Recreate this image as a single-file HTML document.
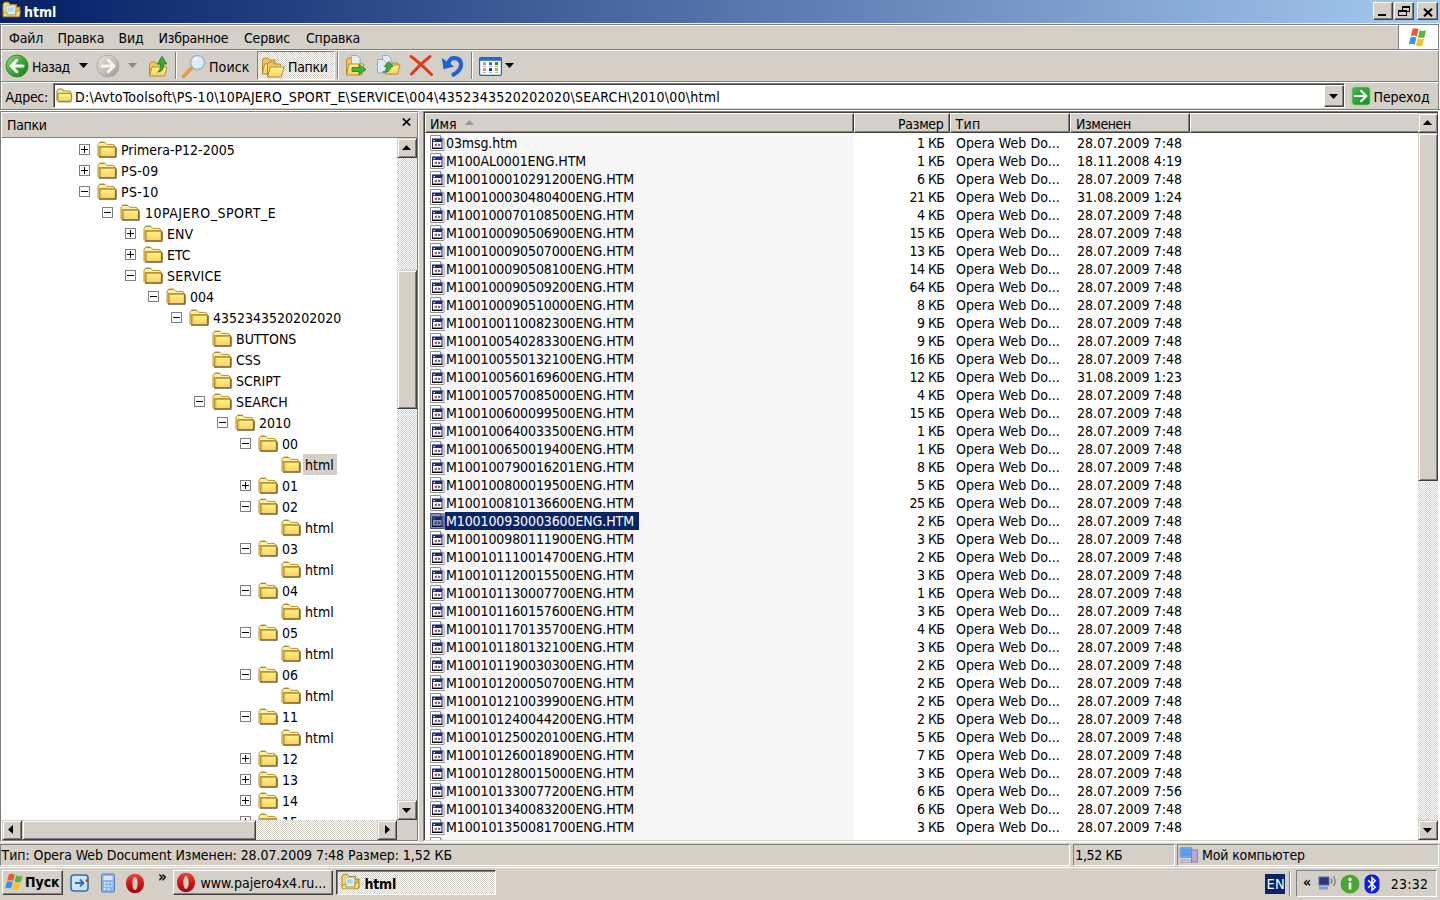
<!DOCTYPE html>
<html lang="ru"><head><meta charset="utf-8"><title>html</title>
<style>
*{box-sizing:border-box;margin:0;padding:0}
html,body{width:1440px;height:900px;overflow:hidden}
body{position:relative;background:#d4d0c8;font-family:"DejaVu Sans Condensed","DejaVu Sans","Liberation Sans",sans-serif;font-size:14px;font-stretch:condensed;color:#000;line-height:18px;white-space:nowrap}
div,span,i,b,svg{position:absolute;display:block}
i,b{font-style:normal;font-weight:normal}
.hl{background:#fff}.sh{background:#808080}.dk{background:#404040}
.raised{background:#d4d0c8;border:1px solid;border-color:#fff #404040 #404040 #fff;box-shadow:inset -1px -1px #808080}
.sbtn{background:#d4d0c8;border:1px solid;border-color:#d4d0c8 #404040 #404040 #d4d0c8;box-shadow:inset 1px 1px #fff,inset -1px -1px #808080}
.sunk{border:1px solid;border-color:#808080 #fff #fff #808080;box-shadow:inset 1px 1px #404040}
.dith{background:repeating-conic-gradient(#fff 0% 25%,#d4d0c8 0% 50%) 0 0/2px 2px}
#title{left:0;top:0;width:1440px;height:23px;background:linear-gradient(90deg,#0a246a 0%,#0a246a 4%,#a6caf0 100%)}
#title .cap{left:24px;top:3px;color:#fff;font-weight:bold;font-size:14px;letter-spacing:0}
.cb{top:2px;width:20px;height:18px}
.mi{top:29px;line-height:18px;letter-spacing:-.2px}
.tb{top:58px;line-height:18px}
.arr{width:0;height:0;border-left:4.5px solid transparent;border-right:4.5px solid transparent;border-top:5px solid #000}
.vsep{width:2px;top:52px;height:27px;border-left:1px solid #808080;border-right:1px solid #fff}
#treepane{left:0;top:111px;width:419px;height:731px;border:1px solid;border-color:#808080 #fff #fff #808080;box-shadow:inset 1px 1px #fff,inset -1px -1px #808080}
#treehdr{left:1px;top:1px;width:415px;height:24px}
#treehdr .t{left:5px;top:3px;letter-spacing:-.33px}
#tree{left:1px;top:26px;width:395px;height:682px;background:#fff;overflow:hidden}
.tr{left:0;width:396px;height:21px}
.bx{top:4px;width:11px;height:11px;border:1px solid #808080;background:#fff}
.bx:before{content:"";position:absolute;left:1px;top:4px;width:7px;height:1px;background:#000}
.bx .v{left:4px;top:1px;width:1px;height:7px;background:#000}
.fo{top:1px}
.tl{top:0;height:20px;line-height:20px;padding:0 2px;letter-spacing:0}
.tl.sel{background:#d4d0c8;top:-1px;height:21px;line-height:22px;padding-right:3px}
#listpane{left:423px;top:111px;width:1017px;height:731px}
#list{left:2px;top:22px;width:993px;height:707px;background:#fff;overflow:hidden}
#sortcol{left:5px;top:0;width:424px;height:707px;background:#f7f7f7}
.r{left:0;width:993px;height:18px;top:0}
.r span{top:0;line-height:18px}
.fi{left:5px;top:1px}
.n{left:20px;padding:0 5px 0 1px;letter-spacing:-.1px}
.z{right:473.5px;text-align:right;letter-spacing:-.5px}
.y{left:531px;letter-spacing:.05px}
.d{left:652px;letter-spacing:.05px}
.r.s .n{background:#0a246a;color:#fff}
.tint{left:5px;top:1px;width:15px;height:16px;background:rgba(10,36,106,.5)}
.hc{top:0;height:20px;background:#d4d0c8;border:1px solid;border-color:#fff #404040 #404040 #fff;box-shadow:inset -1px -1px #808080;line-height:17px}
</style></head><body>
<svg width="0" height="0" style="left:-10px;top:-10px"><defs>
<linearGradient id="gf" x1="0" y1="0" x2="0" y2="1"><stop offset="0" stop-color="#fff68e"/><stop offset="1" stop-color="#fbd062"/></linearGradient>
<linearGradient id="gg" x1="0" y1="0" x2="1" y2="1"><stop offset="0" stop-color="#9be07a"/><stop offset=".5" stop-color="#3aa935"/><stop offset="1" stop-color="#1b7a1c"/></linearGradient>
<linearGradient id="ggr" x1="0" y1="0" x2="1" y2="1"><stop offset="0" stop-color="#e9e9e6"/><stop offset=".6" stop-color="#b9b8b2"/><stop offset="1" stop-color="#9a9994"/></linearGradient>
<linearGradient id="gop" x1="0" y1="0" x2="0" y2="1"><stop offset="0" stop-color="#f0483a"/><stop offset=".5" stop-color="#d41418"/><stop offset="1" stop-color="#9c0c10"/></linearGradient>
<linearGradient id="ggo" x1="0" y1="0" x2="1" y2="1"><stop offset="0" stop-color="#48b848"/><stop offset="1" stop-color="#1c8a24"/></linearGradient>
<g id="folder"><path d="M1 15.500V3.200L2.800 1.200H7.600L9.800 3.400H16Q17.600 3.600 17.800 5.500V7" fill="#fbf0a8" stroke="#b8922e"/><path d="M2.600 .8H7.600V2H2.600Z" fill="#a89030"/><rect x="2.300" y="5.800" width="16" height="9.700" fill="url(#gf)" stroke="#b4872a"/><path d="M2.300 5.900H18.300" stroke="#c09428" stroke-width="1.600"/><path d="M3.500 7V15" stroke="#d4a838" stroke-width="1.500" stroke-opacity=".8"/><path d="M19 6.500V15.800" stroke="#7a621c" stroke-width="1.500"/><path d="M2 16.300H19.500" stroke="#5f5f48" stroke-width="1.300" stroke-opacity=".8"/></g>
<g id="sfolder"><path d="M1 12.500V3.200L2.500 1.200H6L7.600 3H13Q14.600 3.200 14.700 5V6" fill="#fbf0a8" stroke="#a8942c" stroke-width="1.200"/><rect x="1.700" y="5.300" width="13.800" height="8" rx="1.200" fill="url(#gf)" stroke="#a8942c" stroke-width="1.300"/><path d="M2.500 14.100H15" stroke="#6b5b2b" stroke-opacity=".45"/></g>
<g id="hfile"><path d="M.5 .5H10.500L14 4V15.500H.5Z" fill="#fff" stroke="#8e8e8e"/><path d="M10.500 .5V4H14" fill="#ecece8" stroke="#8e8e8e"/><rect x="2.500" y="4" width="9.500" height="9" fill="#fff" stroke="#23235e"/><rect x="2.500" y="4" width="9.500" height="3" fill="#1a2a8c"/><path d="M2 13.500H12.500" stroke="#000"/><path d="M6.800 8.200V11.600L4.100 9.900Z" fill="#c8281e"/><path d="M8.200 8.200V11.600L10.900 9.900Z" fill="#1e50c8"/><rect x="3.500" y="5" width="1.400" height="1.200" fill="#fff"/></g>
</defs></svg>

<div id="title"><svg style="left:2px;top:1px" width="20" height="18" viewBox="0 0 20 18"><path d="M1 15V3.500L2.500 1.200H6.500L8 3.500H14.500V7" fill="#f3d77a" stroke="#b08a2c"/><rect x="13.500" y="6" width="4.500" height="9" fill="#f0b43c" stroke="#9a7420" stroke-width=".8"/><rect x="4.500" y="4.500" width="9" height="9.500" fill="#d8eef0" stroke="#a8c4cc" stroke-width=".8"/><rect x="6" y="6.500" width="5.500" height="4" fill="#a8d4f0"/><path d="M1 15.800L1.800 11.500H5V14H14V10H18.400L17.200 15.800Z" fill="#f7dc80" stroke="#b08a2c" stroke-width=".8"/></svg><span class="cap">html</span>
<div class="cb raised" style="left:1373px"><i style="left:4px;top:11px;width:8px;height:2px;background:#000"></i></div>
<div class="cb raised" style="left:1394px"><i style="left:7px;top:3px;width:8px;height:6px;border:1px solid #000;border-top-width:2px"></i><i style="left:3px;top:7px;width:9px;height:6px;border:1px solid #000;border-top-width:2px;background:#d4d0c8"></i></div>
<div class="cb raised" style="left:1417px;width:21px"><svg style="left:5px;top:4.5px" width="10" height="9" viewBox="0 0 10 9"><path d="M1 .7L9 8.300M9 .7L1 8.300" stroke="#000" stroke-width="2"/></svg></div>
</div>
<i class="hl" style="left:0;top:23px;width:1440px;height:1px;background:#eeece8"></i>
<i class="sh" style="left:0;top:24px;width:1440px;height:1px"></i>
<i class="hl" style="left:1px;top:25px;width:1438px;height:1px"></i>
<i class="sh" style="left:0;top:24px;width:1px;height:87px"></i>
<i class="hl" style="left:1px;top:25px;width:1px;height:85px"></i>
<i class="sh" style="left:1438px;top:24px;width:1px;height:87px"></i>
<i class="hl" style="left:1439px;top:24px;width:1px;height:87px"></i>
<span class="mi" style="left:9px">Файл</span><span class="mi" style="left:57.5px">Правка</span><span class="mi" style="left:118.5px">Вид</span><span class="mi" style="left:158.5px">Избранное</span><span class="mi" style="left:244px">Сервис</span><span class="mi" style="left:306px">Справка</span>
<div style="left:1398px;top:25px;width:40px;height:24px;background:#fff;border-left:1px solid #808080"><svg style="left:9px;top:2px" width="23" height="21" viewBox="0 0 21 20" preserveAspectRatio="none"><path d="M4.2 1.8Q7 .2 9.6 2.2L8 9Q5.4 7.2 2.6 8.8Z" fill="#f2572c"/><path d="M10.8 2.8Q13.6 4.6 16.6 3L15 9.8Q12 11.4 9.2 9.6Z" fill="#5fb535"/><path d="M2.3 10Q5 8.4 7.7 10.2L6.1 17Q3.4 15.2 .7 16.8Z" fill="#3f8fe0"/><path d="M8.9 10.8Q11.7 12.6 14.7 11L13.1 17.8Q10.2 19.4 7.3 17.6Z" fill="#f8c41c"/></svg></div>
<i class="sh" style="left:1px;top:49px;width:1438px;height:1px"></i><i class="hl" style="left:1px;top:50px;width:1438px;height:1px"></i>
<i class="sh" style="left:1px;top:81px;width:1438px;height:1px"></i><i class="hl" style="left:1px;top:82px;width:1438px;height:1px"></i>
<i class="sh" style="left:0;top:109px;width:1440px;height:1px"></i><i class="hl" style="left:0;top:110px;width:1440px;height:1px"></i>

<svg style="left:5px;top:54px" width="24" height="24" viewBox="0 0 24 24"><circle cx="12" cy="12" r="11" fill="url(#gg)" stroke="#2c7a2a" stroke-width=".8"/><path d="M18 12H7M11.800 6.300L6 12L11.800 17.700" stroke="#fff" stroke-width="3" fill="none" stroke-linecap="round" stroke-linejoin="round"/></svg>
<span class="tb" style="left:32px;letter-spacing:-.5px">Назад</span>
<svg style="left:79px;top:63px" width="9" height="5"><polygon points="0,0 9,0 4.5,5" fill="#000"/></svg>
<svg style="left:96px;top:54px" width="24" height="24" viewBox="0 0 24 24"><circle cx="12" cy="12" r="11" fill="url(#ggr)" stroke="#a3a29c" stroke-width=".8"/><path d="M6 12H17M12.200 6.300L18 12L12.200 17.700" stroke="#f4f4f1" stroke-width="3" fill="none" stroke-linecap="round" stroke-linejoin="round"/></svg>
<svg style="left:128px;top:63px" width="9" height="5"><polygon points="0,0 9,0 4.5,5" fill="#8a8a86"/></svg>
<svg style="left:148px;top:54px" width="21" height="24" viewBox="0 0 21 24"><path d="M1.5 21V10L3 8H7L8.5 10H15V12" fill="#ecc860" stroke="#b48d2d"/><path d="M1.5 22L4 13H19L16.5 22Z" fill="url(#gf)" stroke="#b48d2d"/><path d="M9.5 18Q12.5 17 12.5 10H9.5L14 2.2L18.8 10H15.8Q15.8 18 9.5 18Z" fill="#3aa935" stroke="#1f7a22" stroke-width=".8"/></svg>
<i class="vsep" style="left:175px"></i>
<svg style="left:181px;top:54px" width="25" height="25" viewBox="0 0 25 25"><path d="M2.5 22.5L11 13.5" stroke="#e59a3c" stroke-width="3.6" stroke-linecap="round"/><circle cx="16.5" cy="8.5" r="7" fill="#d9eefb" stroke="#9fb7c8" stroke-width="1.6"/><path d="M12.5 7Q13.5 4 17 3.6" stroke="#fff" stroke-width="1.6" fill="none"/></svg>
<span class="tb" style="left:209px;letter-spacing:.1px">Поиск</span>
<div class="dith sunk" style="left:257px;top:51px;width:78px;height:29px;box-shadow:none"></div>
<svg style="left:261px;top:56px" width="24" height="22" viewBox="0 0 24 22"><path d="M1.5 17V4L3 2H7L8.5 4H14V7" fill="#ecc860" stroke="#b48d2d"/><path d="M1.5 18L3.5 8H16L14 18Z" fill="url(#gf)" stroke="#b48d2d"/><path d="M6.5 20V8L8 6H12L13.5 8H19.5V10" fill="#ecc860" stroke="#b48d2d"/><path d="M6.5 21L9.5 11H23L20 21Z" fill="url(#gf)" stroke="#b48d2d"/></svg>
<span class="tb" style="left:288px;letter-spacing:-.3px">Папки</span>
<i class="vsep" style="left:337px"></i>
<svg style="left:345px;top:54px" width="23" height="23" viewBox="0 0 23 23"><path d="M1.5 21V6L3 4H7L8.5 6H15V9" fill="#ecc860" stroke="#b48d2d"/><path d="M6.5 1.5H12L15 4.5V12H6.5Z" fill="#e4ecf8" stroke="#9aa8c8"/><path d="M1.5 21L4 10H19L16.5 21Z" fill="url(#gf)" stroke="#b48d2d"/><path d="M7 13.5H14V10.5L21 15.5L14 20.5V17.5H7Z" fill="#3fb43a" stroke="#1f7a22" stroke-width=".8"/></svg>
<svg style="left:376px;top:54px" width="25" height="23" viewBox="0 0 25 23"><path d="M9 20V9L10.5 7H14L15.5 9H22V12" fill="#ecc860" stroke="#b48d2d"/><path d="M9 20L11.5 11H24L21.5 20Z" fill="url(#gf)" stroke="#b48d2d"/><path d="M6.5 1.5H12L15 4.5V14H6.5Z" fill="#e4ecf8" stroke="#9aa8c8"/><path d="M1.5 5.500H7L10 8.500V19H1.500Z" fill="#dfe8f6" stroke="#9aa8c8"/><path d="M6.500 18Q10.500 18 11 12.500H8.500L12.700 7.500L17 12.500H14.500Q14 19.500 6.500 18Z" fill="#3fb43a" stroke="#1f7a22" stroke-width=".8"/></svg>
<svg style="left:409px;top:54px" width="25" height="23" viewBox="0 0 25 23"><path d="M2 2.500Q10 8 22.500 20.500M21 2.500Q11 10 2.500 20" stroke="#e23a1c" stroke-width="3" stroke-linecap="round" fill="none"/></svg>
<svg style="left:441px;top:55px" width="24" height="22" viewBox="0 0 24 22"><path d="M12.500 19.500Q20.500 15.500 20 8.500Q19 2.800 12.500 3.200Q8.500 3.500 7.500 8.500" stroke="#1f62d0" stroke-width="4.200" fill="none" stroke-linecap="round"/><path d="M.8 3L2.600 14.300L13.200 11.500Z" fill="#1f62d0"/></svg>
<i class="vsep" style="left:471px"></i>
<svg style="left:479px;top:57px" width="23" height="19" viewBox="0 0 23 19"><rect x=".6" y=".6" width="21.800" height="17.800" rx="1.300" fill="#fff" stroke="#2060c0" stroke-width="1.200"/><rect x=".6" y=".6" width="21.800" height="3.200" fill="#2a6ad0"/><rect x="4" y="5.200" width="3" height="2.800" fill="#9aa4ac"/><rect x="10" y="5.200" width="3" height="2.800" fill="#3a6ab0"/><rect x="16" y="5.200" width="3" height="2.800" fill="#1e8a1e"/><rect x="4" y="11.200" width="3" height="2.800" fill="#e0904a"/><rect x="10" y="11.200" width="3" height="2.800" fill="#12307a"/><rect x="16" y="11.200" width="3" height="2.800" fill="#c8a040"/><path d="M4 9.400H7M10 9.400H13M16 9.400H19M4 15.500H7M10 15.500H13M16 15.500H19" stroke="#a0a0b4" stroke-width=".8"/></svg>
<svg style="left:505px;top:63px" width="9" height="5"><polygon points="0,0 9,0 4.5,5" fill="#000"/></svg>
<span style="left:5.5px;top:88px;line-height:18px;letter-spacing:-.3px">Адрес:</span>
<div class="sunk" style="left:53px;top:83px;width:1292px;height:25px;background:#fff"></div>
<svg style="left:55.5px;top:88px" width="17" height="15" viewBox="0 0 17 15"><use href="#sfolder"/></svg>
<span style="left:75px;top:88px;line-height:18px;letter-spacing:.24px" class="addr">D:\AvtoToolsoft\PS-10\10PAJERO_SPORT_E\SERVICE\004\4352343520202020\SEARCH\2010\00\html</span>
<div class="raised" style="left:1324px;top:85px;width:20px;height:22px"></div>
<svg style="left:1329px;top:94px" width="9" height="5"><polygon points="0,0 9,0 4.5,5" fill="#000"/></svg>
<svg style="left:1351px;top:86px" width="20" height="20" viewBox="0 0 20 20"><rect x=".7" y=".7" width="18.600" height="18.600" rx="3" fill="url(#ggo)" stroke="#a8dca0" stroke-width="1.200"/><path d="M4 10H15M10 4.800L15.400 10L10 15.200" stroke="#fff" stroke-width="2.200" fill="none" stroke-linecap="round" stroke-linejoin="round"/></svg>
<span style="left:1373.6px;top:88px;line-height:18px;letter-spacing:-.13px">Переход</span>
<div id="treepane">
<div id="treehdr"><span class="t">Папки</span><svg style="left:400px;top:5px" width="9" height="8" viewBox="0 0 9 8"><path d="M.8 .5L8.2 7.5M8.2 .5L.8 7.5" stroke="#000" stroke-width="1.7"/></svg></div>
<div id="tree">
<div class="tr" style="top:2px"><i class="bx" style="left:77px"><b class="v"></b></i><svg class="fo" style="left:94.5px" width="20" height="17" viewBox="0 0 20 17"><use href="#folder"/></svg><span class="tl" style="left:117px">Primera-P12-2005</span></div>
<div class="tr" style="top:23px"><i class="bx" style="left:77px"><b class="v"></b></i><svg class="fo" style="left:94.5px" width="20" height="17" viewBox="0 0 20 17"><use href="#folder"/></svg><span class="tl" style="left:117px;letter-spacing:0.3px">PS-09</span></div>
<div class="tr" style="top:44px"><i class="bx" style="left:77px"></i><svg class="fo" style="left:94.5px" width="20" height="17" viewBox="0 0 20 17"><use href="#folder"/></svg><span class="tl" style="left:117px;letter-spacing:0.3px">PS-10</span></div>
<div class="tr" style="top:65px"><i class="bx" style="left:100px"></i><svg class="fo" style="left:117.5px" width="20" height="17" viewBox="0 0 20 17"><use href="#folder"/></svg><span class="tl" style="left:141px;letter-spacing:0.5px">10PAJERO_SPORT_E</span></div>
<div class="tr" style="top:86px"><i class="bx" style="left:123px"><b class="v"></b></i><svg class="fo" style="left:140.5px" width="20" height="17" viewBox="0 0 20 17"><use href="#folder"/></svg><span class="tl" style="left:163px">ENV</span></div>
<div class="tr" style="top:107px"><i class="bx" style="left:123px"><b class="v"></b></i><svg class="fo" style="left:140.5px" width="20" height="17" viewBox="0 0 20 17"><use href="#folder"/></svg><span class="tl" style="left:163px">ETC</span></div>
<div class="tr" style="top:128px"><i class="bx" style="left:123px"></i><svg class="fo" style="left:140.5px" width="20" height="17" viewBox="0 0 20 17"><use href="#folder"/></svg><span class="tl" style="left:163px;letter-spacing:0.25px">SERVICE</span></div>
<div class="tr" style="top:149px"><i class="bx" style="left:146px"></i><svg class="fo" style="left:163.5px" width="20" height="17" viewBox="0 0 20 17"><use href="#folder"/></svg><span class="tl" style="left:186px">004</span></div>
<div class="tr" style="top:170px"><i class="bx" style="left:169px"></i><svg class="fo" style="left:186.5px" width="20" height="17" viewBox="0 0 20 17"><use href="#folder"/></svg><span class="tl" style="left:209px">4352343520202020</span></div>
<div class="tr" style="top:191px"><svg class="fo" style="left:209.5px" width="20" height="17" viewBox="0 0 20 17"><use href="#folder"/></svg><span class="tl" style="left:232px">BUTTONS</span></div>
<div class="tr" style="top:212px"><svg class="fo" style="left:209.5px" width="20" height="17" viewBox="0 0 20 17"><use href="#folder"/></svg><span class="tl" style="left:232px">CSS</span></div>
<div class="tr" style="top:233px"><svg class="fo" style="left:209.5px" width="20" height="17" viewBox="0 0 20 17"><use href="#folder"/></svg><span class="tl" style="left:232px">SCRIPT</span></div>
<div class="tr" style="top:254px"><i class="bx" style="left:192px"></i><svg class="fo" style="left:209.5px" width="20" height="17" viewBox="0 0 20 17"><use href="#folder"/></svg><span class="tl" style="left:232px;letter-spacing:0.15px">SEARCH</span></div>
<div class="tr" style="top:275px"><i class="bx" style="left:215px"></i><svg class="fo" style="left:232.5px" width="20" height="17" viewBox="0 0 20 17"><use href="#folder"/></svg><span class="tl" style="left:255px">2010</span></div>
<div class="tr" style="top:296px"><i class="bx" style="left:238px"></i><svg class="fo" style="left:255.5px" width="20" height="17" viewBox="0 0 20 17"><use href="#folder"/></svg><span class="tl" style="left:278px">00</span></div>
<div class="tr" style="top:317px"><svg class="fo" style="left:278.5px" width="20" height="17" viewBox="0 0 20 17"><use href="#folder"/></svg><span class="tl sel" style="left:301px">html</span></div>
<div class="tr" style="top:338px"><i class="bx" style="left:238px"><b class="v"></b></i><svg class="fo" style="left:255.5px" width="20" height="17" viewBox="0 0 20 17"><use href="#folder"/></svg><span class="tl" style="left:278px">01</span></div>
<div class="tr" style="top:359px"><i class="bx" style="left:238px"></i><svg class="fo" style="left:255.5px" width="20" height="17" viewBox="0 0 20 17"><use href="#folder"/></svg><span class="tl" style="left:278px">02</span></div>
<div class="tr" style="top:380px"><svg class="fo" style="left:278.5px" width="20" height="17" viewBox="0 0 20 17"><use href="#folder"/></svg><span class="tl" style="left:301px">html</span></div>
<div class="tr" style="top:401px"><i class="bx" style="left:238px"></i><svg class="fo" style="left:255.5px" width="20" height="17" viewBox="0 0 20 17"><use href="#folder"/></svg><span class="tl" style="left:278px">03</span></div>
<div class="tr" style="top:422px"><svg class="fo" style="left:278.5px" width="20" height="17" viewBox="0 0 20 17"><use href="#folder"/></svg><span class="tl" style="left:301px">html</span></div>
<div class="tr" style="top:443px"><i class="bx" style="left:238px"></i><svg class="fo" style="left:255.5px" width="20" height="17" viewBox="0 0 20 17"><use href="#folder"/></svg><span class="tl" style="left:278px">04</span></div>
<div class="tr" style="top:464px"><svg class="fo" style="left:278.5px" width="20" height="17" viewBox="0 0 20 17"><use href="#folder"/></svg><span class="tl" style="left:301px">html</span></div>
<div class="tr" style="top:485px"><i class="bx" style="left:238px"></i><svg class="fo" style="left:255.5px" width="20" height="17" viewBox="0 0 20 17"><use href="#folder"/></svg><span class="tl" style="left:278px">05</span></div>
<div class="tr" style="top:506px"><svg class="fo" style="left:278.5px" width="20" height="17" viewBox="0 0 20 17"><use href="#folder"/></svg><span class="tl" style="left:301px">html</span></div>
<div class="tr" style="top:527px"><i class="bx" style="left:238px"></i><svg class="fo" style="left:255.5px" width="20" height="17" viewBox="0 0 20 17"><use href="#folder"/></svg><span class="tl" style="left:278px">06</span></div>
<div class="tr" style="top:548px"><svg class="fo" style="left:278.5px" width="20" height="17" viewBox="0 0 20 17"><use href="#folder"/></svg><span class="tl" style="left:301px">html</span></div>
<div class="tr" style="top:569px"><i class="bx" style="left:238px"></i><svg class="fo" style="left:255.5px" width="20" height="17" viewBox="0 0 20 17"><use href="#folder"/></svg><span class="tl" style="left:278px">11</span></div>
<div class="tr" style="top:590px"><svg class="fo" style="left:278.5px" width="20" height="17" viewBox="0 0 20 17"><use href="#folder"/></svg><span class="tl" style="left:301px">html</span></div>
<div class="tr" style="top:611px"><i class="bx" style="left:238px"><b class="v"></b></i><svg class="fo" style="left:255.5px" width="20" height="17" viewBox="0 0 20 17"><use href="#folder"/></svg><span class="tl" style="left:278px">12</span></div>
<div class="tr" style="top:632px"><i class="bx" style="left:238px"><b class="v"></b></i><svg class="fo" style="left:255.5px" width="20" height="17" viewBox="0 0 20 17"><use href="#folder"/></svg><span class="tl" style="left:278px">13</span></div>
<div class="tr" style="top:653px"><i class="bx" style="left:238px"><b class="v"></b></i><svg class="fo" style="left:255.5px" width="20" height="17" viewBox="0 0 20 17"><use href="#folder"/></svg><span class="tl" style="left:278px">14</span></div>
<div class="tr" style="top:674px"><i class="bx" style="left:238px"><b class="v"></b></i><svg class="fo" style="left:255.5px" width="20" height="17" viewBox="0 0 20 17"><use href="#folder"/></svg><span class="tl" style="left:278px">15</span></div>
</div>
<i class="sh" style="left:1px;top:25px;width:415px;height:1px"></i>
<div class="dith" style="left:396px;top:26px;width:20px;height:682px"></div>
<div class="sbtn" style="left:396px;top:26px;width:20px;height:20px"></div><svg style="left:400.5px;top:33px" width="9" height="5"><polygon points="0,5 9,5 4.5,0" fill="#000"/></svg>
<div class="sbtn" style="left:396px;top:158px;width:20px;height:139px"></div>
<div class="sbtn" style="left:396px;top:688px;width:20px;height:20px"></div><svg style="left:400.5px;top:695.5px" width="9" height="5"><polygon points="0,0 9,0 4.5,5" fill="#000"/></svg>
<div class="dith" style="left:1px;top:708px;width:395px;height:20px"></div>
<div class="sbtn" style="left:1px;top:708px;width:20px;height:20px"></div><svg style="left:7px;top:713px" width="5" height="9"><polygon points="5,0 5,9 0,4.5" fill="#000"/></svg>
<div class="sbtn" style="left:21px;top:708px;width:234px;height:20px"></div>
<div class="sbtn" style="left:376px;top:708px;width:20px;height:20px"></div><svg style="left:383.5px;top:713px" width="5" height="9"><polygon points="0,0 0,9 5,4.5" fill="#000"/></svg>
<i style="left:396px;top:708px;width:20px;height:20px;background:#d4d0c8"></i>
</div>
<div id="listpane">
<i class="sh" style="left:0;top:0;width:1016px;height:1px"></i><i class="dk" style="left:1px;top:1px;width:1014px;height:1px"></i>
<i class="sh" style="left:0;top:0;width:1px;height:730px"></i><i class="dk" style="left:1px;top:1px;width:1px;height:728px"></i>
<i class="hl" style="left:1015px;top:0;width:2px;height:731px"></i><i class="hl" style="left:0;top:730px;width:1017px;height:1px"></i>
<div class="hc" style="left:2px;top:2px;width:429px"><span style="left:4px;top:2px">Имя</span><svg style="left:39px;top:6px" width="9" height="5"><polygon points="0,5 9,5 4.5,0" fill="#9a9890"/></svg></div>
<div class="hc" style="left:431px;top:2px;width:96px"><span style="right:5.5px;top:2px;letter-spacing:-.3px">Размер</span></div>
<div class="hc" style="left:527px;top:2px;width:120px"><span style="left:4.5px;top:2px;letter-spacing:.3px">Тип</span></div>
<div class="hc" style="left:647px;top:2px;width:120px"><span style="left:5px;top:2px;letter-spacing:-.4px">Изменен</span></div>
<div class="hc" style="left:767px;top:2px;width:240px"></div>
<div id="list">
<div id="sortcol"></div>
<div class="r" style="top:1px"><svg class="fi" width="16" height="16" viewBox="0 0 16 16"><use href="#hfile"/></svg><span class="n">03msg.htm</span><span class="z">1 КБ</span><span class="y">Opera Web Do...</span><span class="d">28.07.2009 7:48</span></div>
<div class="r" style="top:19px"><svg class="fi" width="16" height="16" viewBox="0 0 16 16"><use href="#hfile"/></svg><span class="n">M100AL0001ENG.HTM</span><span class="z">1 КБ</span><span class="y">Opera Web Do...</span><span class="d">18.11.2008 4:19</span></div>
<div class="r" style="top:37px"><svg class="fi" width="16" height="16" viewBox="0 0 16 16"><use href="#hfile"/></svg><span class="n">M100100010291200ENG.HTM</span><span class="z">6 КБ</span><span class="y">Opera Web Do...</span><span class="d">28.07.2009 7:48</span></div>
<div class="r" style="top:55px"><svg class="fi" width="16" height="16" viewBox="0 0 16 16"><use href="#hfile"/></svg><span class="n">M100100030480400ENG.HTM</span><span class="z">21 КБ</span><span class="y">Opera Web Do...</span><span class="d">31.08.2009 1:24</span></div>
<div class="r" style="top:73px"><svg class="fi" width="16" height="16" viewBox="0 0 16 16"><use href="#hfile"/></svg><span class="n">M100100070108500ENG.HTM</span><span class="z">4 КБ</span><span class="y">Opera Web Do...</span><span class="d">28.07.2009 7:48</span></div>
<div class="r" style="top:91px"><svg class="fi" width="16" height="16" viewBox="0 0 16 16"><use href="#hfile"/></svg><span class="n">M100100090506900ENG.HTM</span><span class="z">15 КБ</span><span class="y">Opera Web Do...</span><span class="d">28.07.2009 7:48</span></div>
<div class="r" style="top:109px"><svg class="fi" width="16" height="16" viewBox="0 0 16 16"><use href="#hfile"/></svg><span class="n">M100100090507000ENG.HTM</span><span class="z">13 КБ</span><span class="y">Opera Web Do...</span><span class="d">28.07.2009 7:48</span></div>
<div class="r" style="top:127px"><svg class="fi" width="16" height="16" viewBox="0 0 16 16"><use href="#hfile"/></svg><span class="n">M100100090508100ENG.HTM</span><span class="z">14 КБ</span><span class="y">Opera Web Do...</span><span class="d">28.07.2009 7:48</span></div>
<div class="r" style="top:145px"><svg class="fi" width="16" height="16" viewBox="0 0 16 16"><use href="#hfile"/></svg><span class="n">M100100090509200ENG.HTM</span><span class="z">64 КБ</span><span class="y">Opera Web Do...</span><span class="d">28.07.2009 7:48</span></div>
<div class="r" style="top:163px"><svg class="fi" width="16" height="16" viewBox="0 0 16 16"><use href="#hfile"/></svg><span class="n">M100100090510000ENG.HTM</span><span class="z">8 КБ</span><span class="y">Opera Web Do...</span><span class="d">28.07.2009 7:48</span></div>
<div class="r" style="top:181px"><svg class="fi" width="16" height="16" viewBox="0 0 16 16"><use href="#hfile"/></svg><span class="n">M100100110082300ENG.HTM</span><span class="z">9 КБ</span><span class="y">Opera Web Do...</span><span class="d">28.07.2009 7:48</span></div>
<div class="r" style="top:199px"><svg class="fi" width="16" height="16" viewBox="0 0 16 16"><use href="#hfile"/></svg><span class="n">M100100540283300ENG.HTM</span><span class="z">9 КБ</span><span class="y">Opera Web Do...</span><span class="d">28.07.2009 7:48</span></div>
<div class="r" style="top:217px"><svg class="fi" width="16" height="16" viewBox="0 0 16 16"><use href="#hfile"/></svg><span class="n">M100100550132100ENG.HTM</span><span class="z">16 КБ</span><span class="y">Opera Web Do...</span><span class="d">28.07.2009 7:48</span></div>
<div class="r" style="top:235px"><svg class="fi" width="16" height="16" viewBox="0 0 16 16"><use href="#hfile"/></svg><span class="n">M100100560169600ENG.HTM</span><span class="z">12 КБ</span><span class="y">Opera Web Do...</span><span class="d">31.08.2009 1:23</span></div>
<div class="r" style="top:253px"><svg class="fi" width="16" height="16" viewBox="0 0 16 16"><use href="#hfile"/></svg><span class="n">M100100570085000ENG.HTM</span><span class="z">4 КБ</span><span class="y">Opera Web Do...</span><span class="d">28.07.2009 7:48</span></div>
<div class="r" style="top:271px"><svg class="fi" width="16" height="16" viewBox="0 0 16 16"><use href="#hfile"/></svg><span class="n">M100100600099500ENG.HTM</span><span class="z">15 КБ</span><span class="y">Opera Web Do...</span><span class="d">28.07.2009 7:48</span></div>
<div class="r" style="top:289px"><svg class="fi" width="16" height="16" viewBox="0 0 16 16"><use href="#hfile"/></svg><span class="n">M100100640033500ENG.HTM</span><span class="z">1 КБ</span><span class="y">Opera Web Do...</span><span class="d">28.07.2009 7:48</span></div>
<div class="r" style="top:307px"><svg class="fi" width="16" height="16" viewBox="0 0 16 16"><use href="#hfile"/></svg><span class="n">M100100650019400ENG.HTM</span><span class="z">1 КБ</span><span class="y">Opera Web Do...</span><span class="d">28.07.2009 7:48</span></div>
<div class="r" style="top:325px"><svg class="fi" width="16" height="16" viewBox="0 0 16 16"><use href="#hfile"/></svg><span class="n">M100100790016201ENG.HTM</span><span class="z">8 КБ</span><span class="y">Opera Web Do...</span><span class="d">28.07.2009 7:48</span></div>
<div class="r" style="top:343px"><svg class="fi" width="16" height="16" viewBox="0 0 16 16"><use href="#hfile"/></svg><span class="n">M100100800019500ENG.HTM</span><span class="z">5 КБ</span><span class="y">Opera Web Do...</span><span class="d">28.07.2009 7:48</span></div>
<div class="r" style="top:361px"><svg class="fi" width="16" height="16" viewBox="0 0 16 16"><use href="#hfile"/></svg><span class="n">M100100810136600ENG.HTM</span><span class="z">25 КБ</span><span class="y">Opera Web Do...</span><span class="d">28.07.2009 7:48</span></div>
<div class="r s" style="top:379px"><svg class="fi" width="16" height="16" viewBox="0 0 16 16"><use href="#hfile"/></svg><i class="tint"></i><span class="n">M100100930003600ENG.HTM</span><span class="z">2 КБ</span><span class="y">Opera Web Do...</span><span class="d">28.07.2009 7:48</span></div>
<div class="r" style="top:397px"><svg class="fi" width="16" height="16" viewBox="0 0 16 16"><use href="#hfile"/></svg><span class="n">M100100980111900ENG.HTM</span><span class="z">3 КБ</span><span class="y">Opera Web Do...</span><span class="d">28.07.2009 7:48</span></div>
<div class="r" style="top:415px"><svg class="fi" width="16" height="16" viewBox="0 0 16 16"><use href="#hfile"/></svg><span class="n">M100101110014700ENG.HTM</span><span class="z">2 КБ</span><span class="y">Opera Web Do...</span><span class="d">28.07.2009 7:48</span></div>
<div class="r" style="top:433px"><svg class="fi" width="16" height="16" viewBox="0 0 16 16"><use href="#hfile"/></svg><span class="n">M100101120015500ENG.HTM</span><span class="z">3 КБ</span><span class="y">Opera Web Do...</span><span class="d">28.07.2009 7:48</span></div>
<div class="r" style="top:451px"><svg class="fi" width="16" height="16" viewBox="0 0 16 16"><use href="#hfile"/></svg><span class="n">M100101130007700ENG.HTM</span><span class="z">1 КБ</span><span class="y">Opera Web Do...</span><span class="d">28.07.2009 7:48</span></div>
<div class="r" style="top:469px"><svg class="fi" width="16" height="16" viewBox="0 0 16 16"><use href="#hfile"/></svg><span class="n">M100101160157600ENG.HTM</span><span class="z">3 КБ</span><span class="y">Opera Web Do...</span><span class="d">28.07.2009 7:48</span></div>
<div class="r" style="top:487px"><svg class="fi" width="16" height="16" viewBox="0 0 16 16"><use href="#hfile"/></svg><span class="n">M100101170135700ENG.HTM</span><span class="z">4 КБ</span><span class="y">Opera Web Do...</span><span class="d">28.07.2009 7:48</span></div>
<div class="r" style="top:505px"><svg class="fi" width="16" height="16" viewBox="0 0 16 16"><use href="#hfile"/></svg><span class="n">M100101180132100ENG.HTM</span><span class="z">3 КБ</span><span class="y">Opera Web Do...</span><span class="d">28.07.2009 7:48</span></div>
<div class="r" style="top:523px"><svg class="fi" width="16" height="16" viewBox="0 0 16 16"><use href="#hfile"/></svg><span class="n">M100101190030300ENG.HTM</span><span class="z">2 КБ</span><span class="y">Opera Web Do...</span><span class="d">28.07.2009 7:48</span></div>
<div class="r" style="top:541px"><svg class="fi" width="16" height="16" viewBox="0 0 16 16"><use href="#hfile"/></svg><span class="n">M100101200050700ENG.HTM</span><span class="z">2 КБ</span><span class="y">Opera Web Do...</span><span class="d">28.07.2009 7:48</span></div>
<div class="r" style="top:559px"><svg class="fi" width="16" height="16" viewBox="0 0 16 16"><use href="#hfile"/></svg><span class="n">M100101210039900ENG.HTM</span><span class="z">2 КБ</span><span class="y">Opera Web Do...</span><span class="d">28.07.2009 7:48</span></div>
<div class="r" style="top:577px"><svg class="fi" width="16" height="16" viewBox="0 0 16 16"><use href="#hfile"/></svg><span class="n">M100101240044200ENG.HTM</span><span class="z">2 КБ</span><span class="y">Opera Web Do...</span><span class="d">28.07.2009 7:48</span></div>
<div class="r" style="top:595px"><svg class="fi" width="16" height="16" viewBox="0 0 16 16"><use href="#hfile"/></svg><span class="n">M100101250020100ENG.HTM</span><span class="z">5 КБ</span><span class="y">Opera Web Do...</span><span class="d">28.07.2009 7:48</span></div>
<div class="r" style="top:613px"><svg class="fi" width="16" height="16" viewBox="0 0 16 16"><use href="#hfile"/></svg><span class="n">M100101260018900ENG.HTM</span><span class="z">7 КБ</span><span class="y">Opera Web Do...</span><span class="d">28.07.2009 7:48</span></div>
<div class="r" style="top:631px"><svg class="fi" width="16" height="16" viewBox="0 0 16 16"><use href="#hfile"/></svg><span class="n">M100101280015000ENG.HTM</span><span class="z">3 КБ</span><span class="y">Opera Web Do...</span><span class="d">28.07.2009 7:48</span></div>
<div class="r" style="top:649px"><svg class="fi" width="16" height="16" viewBox="0 0 16 16"><use href="#hfile"/></svg><span class="n">M100101330077200ENG.HTM</span><span class="z">6 КБ</span><span class="y">Opera Web Do...</span><span class="d">28.07.2009 7:56</span></div>
<div class="r" style="top:667px"><svg class="fi" width="16" height="16" viewBox="0 0 16 16"><use href="#hfile"/></svg><span class="n">M100101340083200ENG.HTM</span><span class="z">6 КБ</span><span class="y">Opera Web Do...</span><span class="d">28.07.2009 7:48</span></div>
<div class="r" style="top:685px"><svg class="fi" width="16" height="16" viewBox="0 0 16 16"><use href="#hfile"/></svg><span class="n">M100101350081700ENG.HTM</span><span class="z">3 КБ</span><span class="y">Opera Web Do...</span><span class="d">28.07.2009 7:48</span></div>
<div class="r" style="top:703px"><svg class="fi" width="16" height="16" viewBox="0 0 16 16"><use href="#hfile"/></svg></div>
</div>
<div class="dith" style="left:995px;top:2px;width:20px;height:727px"></div>
<div class="sbtn" style="left:995px;top:2px;width:20px;height:20px"></div><svg style="left:999.5px;top:9px" width="9" height="5"><polygon points="0,5 9,5 4.5,0" fill="#000"/></svg>
<div class="sbtn" style="left:995px;top:22px;width:20px;height:348px"></div>
<div class="sbtn" style="left:995px;top:709px;width:20px;height:20px"></div><svg style="left:999.5px;top:716.5px" width="9" height="5"><polygon points="0,0 9,0 4.5,5" fill="#000"/></svg>
</div>

<i style="left:0;top:842px;width:1440px;height:1px;background:#f2f0ec"></i>
<div id="status" style="left:0;top:844px;width:1440px;height:22px">
<div class="sunk" style="left:0;top:0;width:1070px;height:22px;box-shadow:none"></div>
<div class="sunk" style="left:1073px;top:0;width:102px;height:22px;box-shadow:none"></div>
<div class="sunk" style="left:1177px;top:0;width:262px;height:22px;box-shadow:none"></div>
<span style="left:1.6px;top:2px;letter-spacing:-.07px" class="st">Тип: Opera Web Document Изменен: 28.07.2009 7:48 Размер: 1,52 КБ</span>
<span style="left:1075.3px;top:2px;letter-spacing:-.36px">1,52 КБ</span>
<svg style="left:1179px;top:2px" width="20" height="19" viewBox="0 0 20 19"><rect x="1" y="1.500" width="12" height="10" rx="1" fill="#6aa8e8" stroke="#8a9cc0"/><rect x="2.500" y="3" width="9" height="7" fill="#5a9cf0"/><path d="M3 14H11L12.500 16.500H1.500Z" fill="#c8c8d8" stroke="#9a9ab0" stroke-width=".6"/><rect x="12.500" y="4" width="6" height="12" fill="#b8a8d8" stroke="#8a80b0"/></svg>
<span style="left:1202px;top:2px;letter-spacing:-.15px">Мой компьютер</span>
</div>
<i class="hl" style="left:0;top:867px;width:1440px;height:1px"></i>
<div class="raised" style="left:2px;top:870px;width:61px;height:25px"></div>
<svg style="left:4px;top:873px" width="20" height="18" viewBox="0 0 17 17.5" preserveAspectRatio="none"><path d="M4.200 1.300Q6.800 -.2 9.200 1.600L7.800 7.800Q5.300 6.200 2.700 7.700Z" fill="#f2572c"/><path d="M10.400 2.200Q13 3.800 15.800 2.400L14.300 8.600Q11.500 10 8.900 8.400Z" fill="#5fb535"/><path d="M2.400 8.800Q5 7.300 7.500 9L6 15.200Q3.500 13.500 .9 15Z" fill="#3f8fe0"/><path d="M8.600 9.600Q11.200 11.200 14 9.800L12.500 16Q9.800 17.400 7.100 15.800Z" fill="#f8c41c"/></svg>
<span style="left:25px;top:873px;font-weight:bold;line-height:18px;letter-spacing:-.06px">Пуск</span>
<svg style="left:70px;top:873px" width="20" height="20" viewBox="0 0 20 20"><rect x="1" y="2" width="17" height="16" rx="3" fill="#cfe4f8" stroke="#2f6eb8" stroke-width="1.600"/><path d="M5 10H13M10 6.500L13.500 10L10 13.500" stroke="#2f6eb8" stroke-width="1.800" fill="none"/><circle cx="17" cy="7.500" r="1.500" fill="#c83a2a"/></svg>
<svg style="left:100px;top:873px" width="16" height="20" viewBox="0 0 16 20"><rect x="1.500" y="1" width="13" height="18" rx="1.500" fill="#8ab4e8" stroke="#5a80c0"/><rect x="3.500" y="3" width="9" height="4" fill="#d8e8f8"/><path d="M4 10H6M7.500 10H9.500M11 10H12.500M4 13H6M7.500 13H9.500M11 13H12.500M4 16H6M7.500 16H9.500" stroke="#e8f0fa" stroke-width="1.600"/></svg>
<svg style="left:125px;top:873px" width="20" height="21" viewBox="0 0 20 21"><path fill-rule="evenodd" fill="url(#gop)" d="M10 .8C15.200 .8 19 5 19 10.500S15.200 20.200 10 20.200S1 16 1 10.500S4.800 .8 10 .8ZM10 4C8.300 4 7.400 7 7.400 10.500S8.300 17 10 17S12.600 14 12.600 10.500S11.700 4 10 4Z"/></svg>
<span style="left:158px;top:867.5px;font-weight:bold;font-size:15px">»</span>
<div class="raised" style="left:173px;top:870px;width:160px;height:25px"></div>
<svg style="left:176px;top:872px" width="20" height="21" viewBox="0 0 20 21"><path fill-rule="evenodd" fill="url(#gop)" d="M10 .8C15.200 .8 19 5 19 10.500S15.200 20.200 10 20.200S1 16 1 10.500S4.800 .8 10 .8ZM10 4C8.300 4 7.400 7 7.400 10.500S8.300 17 10 17S12.600 14 12.600 10.500S11.700 4 10 4Z"/></svg>
<span style="left:200.5px;top:874px;line-height:18px">www.pajero4x4.ru...</span>
<div class="dith sunk" style="left:336px;top:870px;width:160px;height:25px;border-color:#404040 #fff #fff #404040;box-shadow:inset 1px 1px #808080"></div>
<svg style="left:341px;top:873px" width="20" height="18" viewBox="0 0 20 18"><path d="M1 15V3.500L2.500 1.200H6.500L8 3.500H14.500V7" fill="#f3d77a" stroke="#b08a2c"/><rect x="13.500" y="6" width="4.500" height="9" fill="#f0b43c" stroke="#9a7420" stroke-width=".8"/><rect x="4.500" y="4.500" width="9" height="9.500" fill="#d8eef0" stroke="#a8c4cc" stroke-width=".8"/><rect x="6" y="6.500" width="5.500" height="4" fill="#a8d4f0"/><path d="M1 15.800L1.800 11.500H5V14H14V10H18.400L17.200 15.800Z" fill="#f7dc80" stroke="#b08a2c" stroke-width=".8"/></svg>
<span style="left:364.5px;top:875px;font-weight:bold;line-height:18px;letter-spacing:-.2px">html</span>
<div style="left:1265px;top:874px;width:20px;height:20px;background:#0a246a;color:#fff;line-height:20px;text-align:center;font-size:14.5px"><span style="left:1.5px;top:0;line-height:20px;letter-spacing:.2px">EN</span></div>
<i class="vsep" style="left:1289px;top:871px;height:25px"></i>
<div class="sunk" style="left:1296px;top:870px;width:141px;height:27px;box-shadow:none"></div>
<span style="left:1303px;top:873px;font-weight:bold;line-height:18px">«</span>
<svg style="left:1318px;top:873px" width="19" height="19" viewBox="0 0 19 19"><rect x="1" y="4" width="10" height="8" fill="#2a3a7a" stroke="#5a6aa0"/><rect x="1" y="13.500" width="9" height="3" fill="#7a9ad8"/><path d="M13 5.500Q15 8 13 10.500M15.500 3Q19 8 15.500 13" stroke="#7a7a7a" stroke-width="1.300" fill="none"/></svg>
<svg style="left:1340px;top:874px" width="20" height="20" viewBox="0 0 20 20"><circle cx="10" cy="10" r="9.500" fill="#4aa632"/><rect x="8.700" y="8.500" width="2.600" height="7" fill="#fff"/><circle cx="10" cy="5.500" r="1.700" fill="#fff"/></svg>
<svg style="left:1364px;top:874px" width="16" height="20" viewBox="0 0 16 20"><rect x=".5" y=".5" width="15" height="19" rx="6.500" fill="#0a22d8"/><path d="M4.200 6.200L11.200 13.200L8 16.300V3.700L11.200 6.800L4.200 13.800" stroke="#fff" stroke-width="1.500" fill="none"/></svg>
<span style="left:1390.7px;top:875px;line-height:18px;letter-spacing:.24px">23:32</span>
</body></html>
